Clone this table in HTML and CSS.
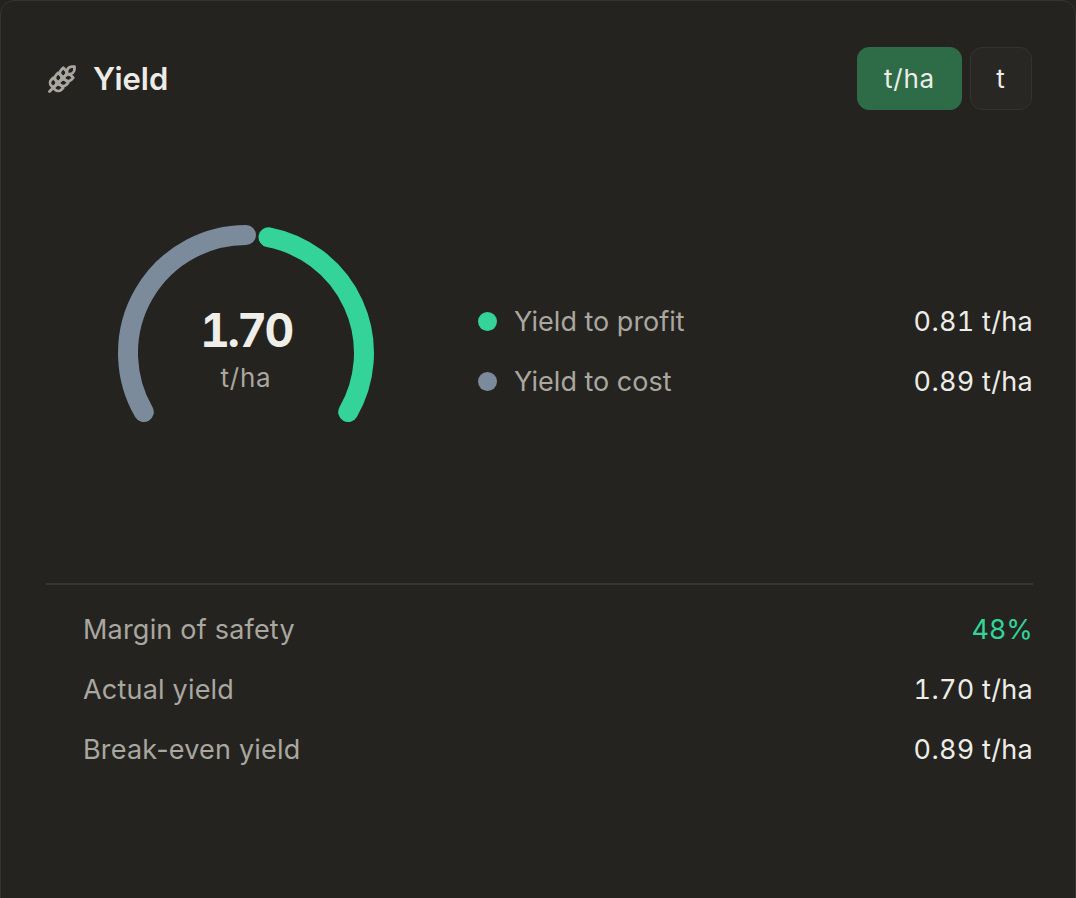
FILE: index.html
```
<!DOCTYPE html>
<html lang="en">
<head>
<meta charset="utf-8">
<title>Yield</title>
<link rel="stylesheet" href="styles.css">
</head>
<body>
<div class="card">
  <div class="header">
    <div class="title">
      <svg class="wheat" viewBox="0 0 24 24" fill="none" stroke="currentColor" stroke-width="2.2" stroke-linecap="round" stroke-linejoin="round">
        <path d="M2 22 16 8"/>
        <path d="M3.47 12.53 5 11l1.53 1.53a3.5 3.5 0 0 1 0 4.94L5 19l-1.53-1.53a3.5 3.5 0 0 1 0-4.94Z"/>
        <path d="M7.47 8.53 9 7l1.53 1.53a3.5 3.5 0 0 1 0 4.94L9 15l-1.53-1.53a3.5 3.5 0 0 1 0-4.94Z"/>
        <path d="M11.47 4.53 13 3l1.53 1.53a3.5 3.5 0 0 1 0 4.94L13 11l-1.53-1.53a3.5 3.5 0 0 1 0-4.94Z"/>
        <path d="M20 2h2v2a4 4 0 0 1-4 4h-2V6a4 4 0 0 1 4-4Z"/>
        <path d="M11.47 17.47 13 19l-1.53 1.53a3.5 3.5 0 0 1-4.94 0L5 19l1.53-1.53a3.5 3.5 0 0 1 4.94 0Z"/>
        <path d="M15.47 13.47 17 15l-1.53 1.53a3.5 3.5 0 0 1-4.94 0L9 15l1.53-1.53a3.5 3.5 0 0 1 4.94 0Z"/>
        <path d="M19.47 9.47 21 11l-1.53 1.53a3.5 3.5 0 0 1-4.94 0L13 11l1.53-1.53a3.5 3.5 0 0 1 4.94 0Z"/>
      </svg>
      <h1>Yield</h1>
    </div>
    <div class="toggle">
      <button class="btn active">t/ha</button>
      <button class="btn">t</button>
    </div>
  </div>

  <div class="chart">
    <div class="gauge">
      <svg class="gauge-svg" viewBox="0 0 276 216" width="276" height="216">
        <path d="M35.81 197 A118 118 0 0 1 138 20" fill="none" stroke="#7b8b9b" stroke-width="20" stroke-linecap="round"/>
        <path d="M160.5 22.2 A118 118 0 0 1 240.19 197" fill="none" stroke="#34d399" stroke-width="20" stroke-linecap="round"/>
      </svg>
      <div class="gauge-label">
        <span class="gauge-value">1.70</span>
        <span class="gauge-unit">t/ha</span>
      </div>
    </div>
    <div class="legend">
      <div class="row">
        <span class="key"><span class="dot dot-profit"></span>Yield to profit</span>
        <span class="val">0.81 t/ha</span>
      </div>
      <div class="row">
        <span class="key"><span class="dot dot-cost"></span>Yield to cost</span>
        <span class="val">0.89 t/ha</span>
      </div>
    </div>
  </div>

  <div class="stats">
    <div class="row">
      <span class="label">Margin of safety</span>
      <span class="val green">48%</span>
    </div>
    <div class="row">
      <span class="label">Actual yield</span>
      <span class="val">1.70 t/ha</span>
    </div>
    <div class="row">
      <span class="label">Break-even yield</span>
      <span class="val">0.89 t/ha</span>
    </div>
  </div>
</div>
</body>
</html>
```
FILE: styles.css
```
* { box-sizing: border-box; }
html, body {
  margin: 0;
  padding: 0;
  background: #242320;
  overflow: hidden;
}
body {
  font-family: Inter, "Noto Sans", sans-serif;
  color: #edece7;
}
.card {
  width: 1076px;
  min-height: 1000px;
  background: #242320;
  border: 1px solid #35342f;
  border-radius: 14px;
  padding: 46px 42px 0 45px;
}
.header {
  display: flex;
  justify-content: space-between;
  align-items: center;
  height: 63px;
}
.title {
  display: flex;
  align-items: center;
  gap: 16px;
}
.wheat {
  width: 30px;
  height: 30px;
  color: #a9a79f;
  margin-left: 1px;
}
h1 {
  margin: 0;
  font-size: 31px;
  font-weight: 600;
  color: #ecebe6;
}
.toggle {
  display: flex;
  gap: 8px;
  margin-right: 1px;
}
.btn {
  font-family: inherit;
  font-size: 26px;
  letter-spacing: 0.8px;
  height: 63px;
  border-radius: 12px;
  border: 1px solid #34332f;
  background: #282724;
  color: #edece7;
  padding: 0;
  width: 62px;
}
.btn.active {
  background: #2e6c48;
  border-color: #2e6c48;
  width: 105px;
}
.chart {
  height: 473px;
  padding-top: 105px;
  display: flex;
  align-items: flex-start;
}
.gauge {
  position: relative;
  width: 276px;
  height: 216px;
  margin-left: 62px;
  flex-shrink: 0;
}
.gauge-svg {
  display: block;
}
.gauge-label {
  position: absolute;
  left: 0;
  right: 0;
  top: 87px;
  display: flex;
  flex-direction: column;
  align-items: center;
}
.gauge-value {
  font-size: 46px;
  font-weight: 700;
  font-variant-numeric: tabular-nums;
  letter-spacing: -2.5px;
  line-height: 56px;
  color: #efeee9;
}
.gauge-unit {
  font-size: 26px;
  letter-spacing: 0.8px;
  color: #a9a79f;
  line-height: 32px;
  margin-top: 4px;
}
.legend {
  flex: 1;
  margin-left: 94px;
  margin-top: 76px;
  display: flex;
  flex-direction: column;
}
.row {
  display: flex;
  justify-content: space-between;
  align-items: center;
  height: 60px;
  font-size: 27px;
}
.key {
  display: flex;
  align-items: center;
  gap: 17px;
  color: #a9a79f;
}
.dot {
  width: 19px;
  height: 19px;
  border-radius: 50%;
}
.dot-profit { background: #34d399; }
.dot-cost { background: #7b8b9b; }
.val {
  color: #edece7;
  font-variant-numeric: tabular-nums;
  letter-spacing: 0.3px;
}
.val.green {
  color: #34d399;
  font-variant-numeric: normal;
}
.stats {
  border-top: 2px solid #363531;
  padding: 14px 0 0 37px;
  display: flex;
  flex-direction: column;
}
.label {
  color: #a9a79f;
  letter-spacing: 0.2px;
}
```
